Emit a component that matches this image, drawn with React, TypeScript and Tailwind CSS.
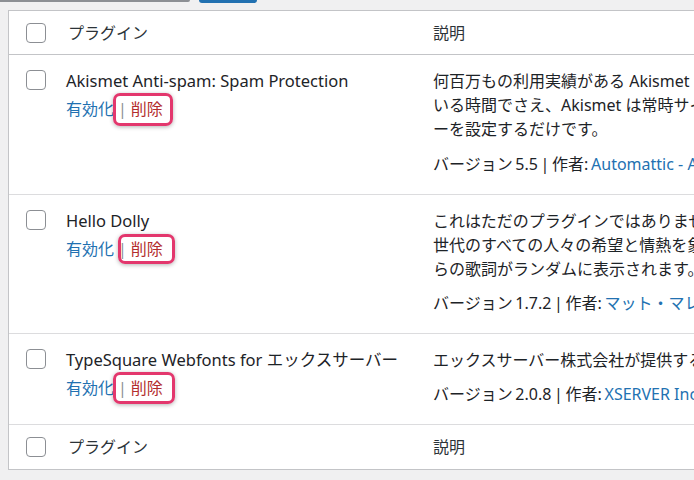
import React from "react";

type Row = {
  title: string;
  desc: string[];
  version: string;
  author: string;
  box: { left: number; top: number; w: number; h: number };
  gap: string;
};

const rows: Row[] = [
  {
    title: "Akismet Anti-spam: Spam Protection",
    desc: [
      "何百万もの利用実績がある Akismet は、あなたのブログをスパムから保護する最良の方法といわれています。あなたが眠って",
      "いる時間でさえ、Akismet は常時サイトを保護し続けます。始めるには、Akismet 設定ページに移動して API キ",
      "ーを設定するだけです。",
    ],
    version: "5.5",
    author: "Automattic - Anti-spam Team",
    box: { left: 47, top: -4, w: 60, h: 33 },
    gap: "mt-[11px]",
  },
  {
    title: "Hello Dolly",
    desc: [
      "これはただのプラグインではありません。Louis Armstrong によって歌われた最も有名な二つの単語に要約される一",
      "世代のすべての人々の希望と情熱を象徴するものです。これが有効にされると、すべての管理画面の右上にミュージカルか",
      "らの歌詞がランダムに表示されます。",
    ],
    version: "1.7.2",
    author: "マット・マレンウェッグ",
    box: { left: 52, top: -3, w: 57, h: 30 },
    gap: "mt-[10px]",
  },
  {
    title: "TypeSquare Webfonts for エックスサーバー",
    desc: ["エックスサーバー株式会社が提供するWebフォントサービス「TypeSquare Webfonts for エックスサーバー」"],
    version: "2.0.8",
    author: "XSERVER Inc.",
    box: { left: 47, top: -4, w: 62, h: 32 },
    gap: "mt-[10px]",
  },
];

function Checkbox() {
  return <div className="w-[20px] h-[20px] border border-[#8c8f94] rounded-[4px] bg-white shrink-0" />;
}

export default function App() {
  return (
    <div className="w-[694px] h-[480px] overflow-hidden bg-[#f0f0f1] font-['Noto_Sans','Noto_Sans_CJK_JP',sans-serif] text-[16px] text-[#1d2327]">
      <div className="h-[10px] flex items-start">
        <div className="w-[190px] h-[2px] bg-[#8c8f94] rounded-br-[3px]" />
        <div className="ml-[9px] w-[58px] h-[3px] bg-[#2271b1] rounded-b-[3px]" />
      </div>
      <div className="ml-[8px] w-[800px] border border-[#c3c4c7] bg-white">
        {/* header */}
        <div className="flex h-[44px] items-center border-b border-[#c3c4c7]">
          <div className="w-[57px] pl-[17px]">
            <Checkbox />
          </div>
          <div className="w-[367px] pl-[2px] text-[#2c3338]">プラグイン</div>
          <div className="text-[#2c3338]">説明</div>
        </div>
        {rows.map((r, i) => (
          <div key={i} className="flex border-b border-[#dcdcde] last:border-[#c3c4c7]">
            <div className="w-[57px] pl-[17px] pt-[15px]">
              <Checkbox />
            </div>
            <div className="w-[367px] pt-[14px]">
              <div className="text-[16.5px] leading-[24px] whitespace-nowrap">{r.title}</div>
              <div className="relative mt-[4px] leading-[24px] whitespace-nowrap">
                <span className="text-[#2271b1]">有効化</span>
                <span className="text-[#8c8f94] mx-[4px]">|</span>
                <span className="text-[#b32d2e]">削除</span>
                <div
                  className="absolute border-[3px] border-[#e3376d] rounded-[7px] shadow-[0_1px_4px_rgba(0,0,0,0.3)]"
                  style={{ left: r.box.left, top: r.box.top, width: r.box.w, height: r.box.h }}
                />
              </div>
            </div>
            <div className="flex-1 pt-[14px] pb-[18px] overflow-hidden">
              {r.desc.map((d, j) => (
                <div key={j} className="leading-[24px] whitespace-nowrap">
                  {d}
                </div>
              ))}
              <div className={`${r.gap} leading-[24px] whitespace-nowrap [word-spacing:-1.5px]`}>
                バージョン {r.version} | 作者:{" "}
                <span className="text-[#2271b1] [word-spacing:normal]">{r.author}</span> |{" "}
                <span className="text-[#2271b1] [word-spacing:normal]">詳細を表示</span>
              </div>
            </div>
          </div>
        ))}
        {/* footer */}
        <div className="flex h-[44px] items-center">
          <div className="w-[57px] pl-[17px]">
            <Checkbox />
          </div>
          <div className="w-[367px] pl-[2px] text-[#2c3338]">プラグイン</div>
          <div className="text-[#2c3338]">説明</div>
        </div>
      </div>
    </div>
  );
}
